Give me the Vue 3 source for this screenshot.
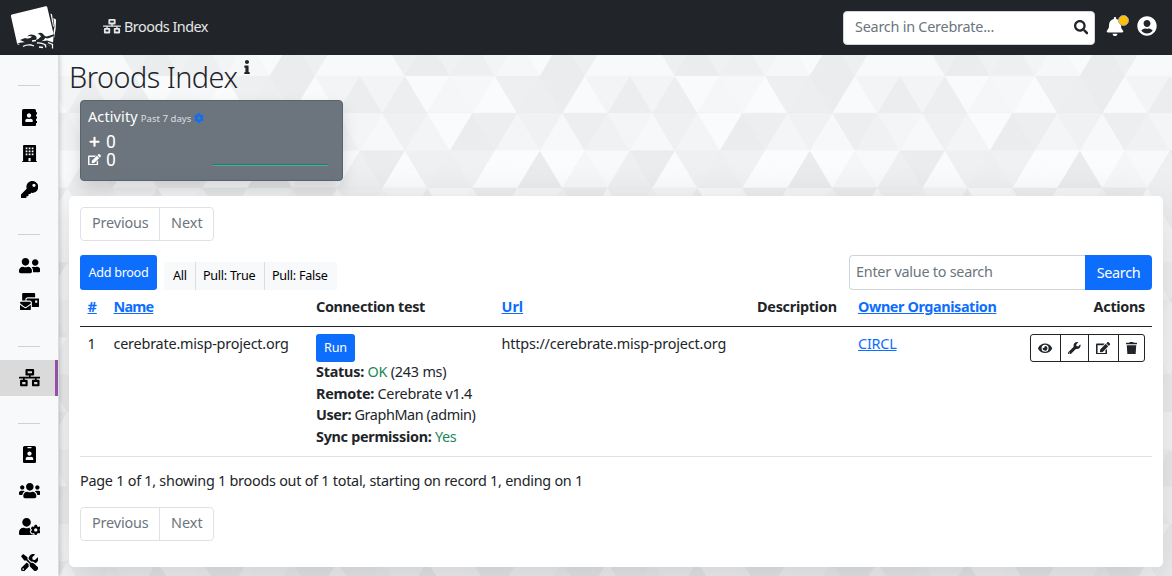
<script setup>
const icons = {
  network: [640, 'M640 264v-16c0-8.84-7.16-16-16-16H344v-40h72c17.67 0 32-14.33 32-32V32c0-17.67-14.33-32-32-32H224c-17.67 0-32 14.33-32 32v128c0 17.67 14.33 32 32 32h72v40H16c-8.84 0-16 7.16-16 16v16c0 8.84 7.16 16 16 16h104v40H64c-17.67 0-32 14.33-32 32v128c0 17.67 14.33 32 32 32h160c17.67 0 32-14.33 32-32V352c0-17.67-14.33-32-32-32h-56v-40h304v40h-56c-17.67 0-32 14.33-32 32v128c0 17.67 14.33 32 32 32h160c17.67 0 32-14.33 32-32V352c0-17.67-14.33-32-32-32h-56v-40h104c8.84 0 16-7.16 16-16zM256 128V64h128v64H256zm-64 320H96v-64h96v64zm352 0h-96v-64h96v64z'],
  book: [448, 'M436 160c6.6 0 12-5.4 12-12v-40c0-6.6-5.4-12-12-12h-20V48c0-26.5-21.5-48-48-48H48C21.5 0 0 21.5 0 48v416c0 26.5 21.5 48 48 48h320c26.5 0 48-21.5 48-48v-48h20c6.6 0 12-5.4 12-12v-40c0-6.6-5.4-12-12-12h-20v-64h20c6.6 0 12-5.4 12-12v-40c0-6.6-5.4-12-12-12h-20v-64h20zm-228-32c35.3 0 64 28.7 64 64s-28.7 64-64 64-64-28.7-64-64 28.7-64 64-64zm112 236.8c0 10.6-10 19.2-22.4 19.2H118.4C106 384 96 375.4 96 364.8v-19.2c0-31.8 30.1-57.6 67.2-57.6h5c12.3 5.1 25.7 8 39.8 8s27.6-2.9 39.8-8h5c37.1 0 67.2 25.8 67.2 57.6v19.2z'],
  building: [448, 'M436 480h-20V24c0-13.255-10.745-24-24-24H56C42.745 0 32 10.745 32 24v456H12c-6.627 0-12 5.373-12 12v20h448v-20c0-6.627-5.373-12-12-12zM108 72h52v52h-52zM198 72h52v52h-52zM288 72h52v52h-52zM108 162h52v52h-52zM198 162h52v52h-52zM288 162h52v52h-52zM108 252h52v52h-52zM198 252h52v52h-52zM288 252h52v52h-52zM192 384h64v96h-64z'],
  key: [512, 'M512 176.001C512 273.203 433.202 352 336 352c-11.22 0-22.19-1.062-32.827-3.069l-24.012 27.014A23.999 23.999 0 0 1 261.223 384H224v40c0 13.255-10.745 24-24 24h-40v40c0 13.255-10.745 24-24 24H24c-13.255 0-24-10.745-24-24v-78.059c0-6.365 2.529-12.47 7.029-16.971l161.802-161.802C163.108 213.814 160 195.271 160 176 160 78.798 238.797.001 335.999 0 433.488-.001 512 78.511 512 176.001zM336 128c0 26.51 21.49 48 48 48s48-21.49 48-48-21.49-48-48-48-48 21.49-48 48z'],
  friends: [640, 'M192 256c61.9 0 112-50.1 112-112S253.9 32 192 32 80 82.1 80 144s50.1 112 112 112zm76.8 32h-8.3c-20.8 10-43.9 16-68.5 16s-47.6-6-68.5-16h-8.3C51.6 288 0 339.6 0 403.2V432c0 26.5 21.5 48 48 48h288c26.5 0 48-21.5 48-48v-28.8c0-63.6-51.6-115.2-115.2-115.2zM480 256c53 0 96-43 96-96s-43-96-96-96-96 43-96 96 43 96 96 96zm48 32h-3.8c-13.9 4.8-28.6 8-44.2 8s-30.3-3.2-44.2-8H432c-20.4 0-39.2 5.9-55.7 15.4 24.4 26.3 39.7 61.2 39.7 99.8v38.4c0 2.2-.5 4.3-.6 6.4H592c26.5 0 48-21.5 48-48 0-61.9-50.1-112-112-112z'],
  mail: [576, 'M160 448c-25.6 0-51.2-22.4-64-32-64-44.8-83.2-60.8-96-70.4V480c0 17.67 14.33 32 32 32h256c17.67 0 32-14.33 32-32V345.6c-12.8 9.6-32 25.6-96 70.4-12.8 9.6-38.4 32-64 32zm128-192H32c-17.67 0-32 14.33-32 32v16c25.6 19.2 22.4 19.2 115.2 86.4 9.6 6.4 28.8 25.6 44.8 25.6s35.2-19.2 44.8-22.4c92.8-67.2 89.6-67.2 115.2-86.4V288c0-17.67-14.33-32-32-32zm256-96H224c-17.67 0-32 14.33-32 32v32h96c33.21 0 60.59 25.42 63.71 57.82l.29-.22V416h192c17.67 0 32-14.33 32-32V192c0-17.67-14.33-32-32-32zm-32 128h-64v-64h64v64zm-352-96c0-35.29 28.71-64 64-64h224V32c0-17.67-14.33-32-32-32H96C78.33 0 64 14.33 64 32v192h96v-32z'],
  badge: [384, 'M336 0H48C21.5 0 0 21.5 0 48v416c0 26.5 21.5 48 48 48h288c26.5 0 48-21.5 48-48V48c0-26.5-21.5-48-48-48zM144 32h96c8.8 0 16 7.2 16 16s-7.2 16-16 16h-96c-8.8 0-16-7.2-16-16s7.2-16 16-16zm48 128c35.3 0 64 28.7 64 64s-28.7 64-64 64-64-28.7-64-64 28.7-64 64-64zm112 236.8c0 10.6-10 19.2-22.4 19.2H102.4C90 416 80 407.4 80 396.8v-19.2c0-31.8 30.1-57.6 67.2-57.6h5c12.3 5.1 25.7 8 39.8 8s27.6-2.9 39.8-8h5c37.1 0 67.2 25.8 67.2 57.6v19.2z'],
  users: [640, 'M96 224c35.3 0 64-28.7 64-64s-28.7-64-64-64-64 28.7-64 64 28.7 64 64 64zm448 0c35.3 0 64-28.7 64-64s-28.7-64-64-64-64 28.7-64 64 28.7 64 64 64zm32 32h-64c-17.6 0-33.5 7.1-45.1 18.6 40.3 22.1 68.9 62 75.1 109.4h66c17.7 0 32-14.3 32-32v-32c0-35.3-28.7-64-64-64zm-256 0c61.9 0 112-50.1 112-112S381.9 32 320 32 208 82.1 208 144s50.1 112 112 112zm76.8 32h-8.3c-20.8 10-43.9 16-68.5 16s-47.6-6-68.5-16h-8.3C179.6 288 128 339.6 128 403.2V432c0 26.5 21.5 48 48 48h288c26.5 0 48-21.5 48-48v-28.8c0-63.6-51.6-115.2-115.2-115.2zm-223.7-13.4C161.5 263.1 145.6 256 128 256H64c-35.3 0-64 28.7-64 64v32c0 17.7 14.3 32 32 32h65.9c6.3-47.4 34.9-87.3 75.2-109.4z'],
  usercog: [640, 'M610.5 373.3c2.6-14.1 2.6-28.5 0-42.6l25.8-14.9c3-1.7 4.3-5.2 3.3-8.5-6.7-21.6-18.2-41.2-33.2-57.4-2.3-2.5-6-3.1-9-1.4l-25.8 14.9c-10.9-9.3-23.4-16.5-36.9-21.3v-29.8c0-3.4-2.4-6.4-5.7-7.1-22.3-5-45-4.8-66.2 0-3.3.7-5.7 3.7-5.7 7.1v29.8c-13.5 4.8-26 12-36.9 21.3l-25.8-14.9c-2.9-1.7-6.7-1.1-9 1.4-15 16.2-26.5 35.8-33.2 57.4-1 3.3.4 6.8 3.3 8.5l25.8 14.9c-2.6 14.1-2.6 28.5 0 42.6l-25.8 14.9c-3 1.7-4.3 5.2-3.3 8.5 6.7 21.6 18.2 41.1 33.2 57.4 2.3 2.5 6 3.1 9 1.4l25.8-14.9c10.9 9.3 23.4 16.5 36.9 21.3v29.8c0 3.4 2.4 6.4 5.7 7.1 22.3 5 45 4.8 66.2 0 3.3-.7 5.7-3.7 5.7-7.1v-29.8c13.5-4.8 26-12 36.9-21.3l25.8 14.9c2.9 1.7 6.7 1.1 9-1.4 15-16.2 26.5-35.8 33.2-57.4 1-3.3-.4-6.8-3.3-8.5l-25.8-14.9zM496 400.5c-26.8 0-48.5-21.8-48.5-48.5s21.8-48.5 48.5-48.5 48.5 21.8 48.5 48.5-21.7 48.5-48.5 48.5zM224 256c70.7 0 128-57.3 128-128S294.7 0 224 0 96 57.3 96 128s57.3 128 128 128zm201.2 226.5c-2.3-1.2-4.6-2.6-6.8-3.9l-7.9 4.6c-6 3.4-12.8 5.3-19.6 5.3-10.9 0-21.4-4.6-28.9-12.6-18.3-19.8-32.3-43.9-40.2-69.6-5.5-17.7 1.9-36.4 17.9-45.7l7.9-4.6c-.1-2.6-.1-5.2 0-7.8l-7.9-4.6c-16-9.2-23.4-28-17.9-45.7.9-2.9 2.2-5.8 3.2-8.7-3.8-.3-7.5-1.2-11.4-1.2h-16.7c-22.2 10.2-46.9 16-72.9 16s-50.6-5.8-72.9-16h-16.7C60.2 288 0 348.2 0 422.4V464c0 26.5 21.5 48 48 48h352c10.1 0 19.5-3.2 27.2-8.5-1.2-3.8-2-7.7-2-11.8v-9.2z'],
  tools: [512, 'M501.1 395.7L384 278.6c-23.1-23.1-57.6-27.6-85.4-13.9L192 158.1V96L64 0 0 64l96 128h62.1l106.6 106.6c-13.6 27.8-9.2 62.3 13.9 85.4l117.1 117.1c14.6 14.6 38.2 14.6 52.7 0l52.7-52.7c14.5-14.6 14.5-38.2 0-52.7zM331.7 225c28.3 0 54.9 11 74.9 31l19.4 19.4c15.8-6.9 30.8-16.5 43.8-29.5 37.1-37.1 49.7-89.3 37.9-136.7-2.2-9-13.5-12.1-20.1-5.5l-74.4 74.4-67.9-11.3L334 98.9l74.4-74.4c6.6-6.6 3.4-17.9-5.7-20.2-47.4-11.7-99.6.9-136.6 37.9-28.5 28.5-41.9 66.1-41.2 103.6l82.1 82.1c8.1-1.9 16.5-2.9 24.7-2.9zm-103.9 82l-56.7-56.7L18.7 402.8c-25 25-25 65.5 0 90.5s65.5 25 90.5 0l123.6-123.6c-7.6-19.9-9.9-41.6-5-62.7zM64 472c-13.2 0-24-10.8-24-24 0-13.3 10.7-24 24-24s24 10.7 24 24c0 13.2-10.7 24-24 24z'],
  search: [512, 'M505 442.7L405.3 343c-4.5-4.5-10.6-7-17-7H372c27.6-35.3 44-79.7 44-128C416 93.1 322.9 0 208 0S0 93.1 0 208s93.1 208 208 208c48.3 0 92.7-16.4 128-44v16.3c0 6.4 2.5 12.5 7 17l99.7 99.7c9.4 9.4 24.6 9.4 33.9 0l28.3-28.3c9.4-9.4 9.4-24.6.1-34zM208 336c-70.7 0-128-57.2-128-128 0-70.7 57.2-128 128-128 70.7 0 128 57.2 128 128 0 70.7-57.2 128-128 128z'],
  bell: [448, 'M224 512c35.32 0 63.97-28.65 63.97-64H160.03c0 35.35 28.65 64 63.97 64zm215.39-149.71c-19.32-20.76-55.47-51.99-55.47-154.29 0-77.7-54.48-139.9-127.94-155.16V32c0-17.67-14.32-32-31.98-32s-31.98 14.33-31.98 32v20.84C118.56 68.1 64.08 130.3 64.08 208c0 102.3-36.15 133.53-55.47 154.29-6 6.45-8.66 14.16-8.61 21.71.11 16.4 12.98 32 32.1 32h383.8c19.12 0 32-15.6 32.1-32 .05-7.55-2.61-15.27-8.61-21.71z'],
  user: [496, 'M248 8C111 8 0 119 0 256s111 248 248 248 248-111 248-248S385 8 248 8zm0 96c48.6 0 88 39.4 88 88s-39.4 88-88 88-88-39.4-88-88 39.4-88 88-88zm0 344c-58.7 0-111.3-26.6-146.5-68.2 18.8-35.4 55.6-59.8 98.5-59.8 2.4 0 4.8.4 7.1 1.1 13 4.2 26.6 6.9 40.9 6.9 14.3 0 28-2.7 40.9-6.9 2.3-.7 4.7-1.1 7.1-1.1 42.9 0 79.7 24.4 98.5 59.8C359.3 421.4 306.7 448 248 448z'],
  info: [192, 'M20 424.229h20V279.771H20c-11.046 0-20-8.954-20-20V212c0-11.046 8.954-20 20-20h112c11.046 0 20 8.954 20 20v212.229h20c11.046 0 20 8.954 20 20V492c0 11.046-8.954 20-20 20H20c-11.046 0-20-8.954-20-20v-47.771c0-11.046 8.954-20 20-20zM96 0C56.235 0 24 32.235 24 72s32.235 72 72 72 72-32.235 72-72S135.764 0 96 0z'],
  plus: [448, 'M416 208H272V64c0-17.67-14.33-32-32-32h-32c-17.67 0-32 14.33-32 32v144H32c-17.67 0-32 14.33-32 32v32c0 17.67 14.33 32 32 32h144v144c0 17.67 14.33 32 32 32h32c17.67 0 32-14.33 32-32V304h144c17.67 0 32-14.33 32-32v-32c0-17.67-14.33-32-32-32z'],
  edit: [576, 'M402.6 83.2l90.2 90.2c3.8 3.8 3.8 10 0 13.8L274.4 405.6l-92.8 10.3c-12.4 1.4-22.9-9.1-21.5-21.5l10.3-92.8L388.8 83.2c3.8-3.8 10-3.8 13.8 0zm162-22.9l-48.8-48.8c-15.2-15.2-39.9-15.2-55.2 0l-35.4 35.4c-3.8 3.8-3.8 10 0 13.8l90.2 90.2c3.8 3.8 10 3.8 13.8 0l35.4-35.4c15.2-15.3 15.2-40 0-55.2zM384 346.2V448H64V128h229.8c3.2 0 6.2-1.3 8.5-3.5l40-40c7.6-7.6 2.2-20.5-8.5-20.5H48C21.5 64 0 85.5 0 112v352c0 26.5 21.5 48 48 48h352c26.5 0 48-21.5 48-48V306.2c0-10.7-12.9-16-20.5-8.5l-40 40c-2.2 2.3-3.5 5.3-3.5 8.5z'],
  cog: [512, 'M487.4 315.7l-42.6-24.6c4.3-23.2 4.3-47 0-70.2l42.6-24.6c4.9-2.8 7.1-8.6 5.5-14-11.1-35.6-30-67.8-54.7-94.6-3.8-4.1-10-5.1-14.8-2.3L380.8 110c-17.9-15.4-38.5-27.3-60.8-35.1V25.8c0-5.6-3.9-10.5-9.4-11.7-36.7-8.2-74.3-7.8-109.2 0-5.5 1.2-9.4 6.1-9.4 11.7V75c-22.2 7.9-42.8 19.8-60.8 35.1L88.7 85.5c-4.9-2.8-11-1.9-14.8 2.3-24.7 26.7-43.6 58.9-54.7 94.6-1.7 5.4.6 11.2 5.5 14L67.3 221c-4.3 23.2-4.3 47 0 70.2l-42.6 24.6c-4.9 2.8-7.1 8.6-5.5 14 11.1 35.6 30 67.8 54.7 94.6 3.8 4.1 10 5.1 14.8 2.3l42.6-24.6c17.9 15.4 38.5 27.3 60.8 35.1v49.2c0 5.6 3.9 10.5 9.4 11.7 36.7 8.2 74.3 7.8 109.2 0 5.5-1.2 9.4-6.1 9.4-11.7v-49.2c22.2-7.9 42.8-19.8 60.8-35.1l42.6 24.6c4.9 2.8 11 1.9 14.8-2.3 24.7-26.7 43.6-58.9 54.7-94.6 1.5-5.5-.7-11.3-5.6-14.1zM256 336c-44.1 0-80-35.9-80-80s35.9-80 80-80 80 35.9 80 80-35.9 80-80 80z'],
  eye: [576, 'M572.52 241.4C518.29 135.59 410.93 64 288 64S57.68 135.64 3.48 241.41a32.35 32.35 0 0 0 0 29.19C57.71 376.41 165.07 448 288 448s230.32-71.64 284.52-177.41a32.35 32.35 0 0 0 0-29.19zM288 400a144 144 0 1 1 144-144 143.93 143.93 0 0 1-144 144zm0-240a95.31 95.31 0 0 0-25.31 3.79 47.85 47.85 0 0 1-66.9 66.9A95.78 95.78 0 1 0 288 160z'],
  wrench: [512, 'M507.73 109.1c-2.24-9.03-13.54-12.09-20.12-5.51l-74.36 74.36-67.88-11.31-11.31-67.88 74.36-74.36c6.62-6.62 3.43-17.9-5.66-20.16-47.38-11.74-99.55.91-136.58 37.93-39.64 39.64-50.55 97.1-34.05 147.2L18.74 402.76c-24.99 24.99-24.99 65.51 0 90.5 24.99 24.99 65.51 24.99 90.5 0l213.21-213.21c50.12 16.71 107.47 5.68 147.37-34.22 37.07-37.07 49.7-89.32 37.91-136.73zM64 472c-13.25 0-24-10.75-24-24 0-13.26 10.75-24 24-24s24 10.74 24 24c0 13.25-10.75 24-24 24z'],
  trash: [448, 'M432 32H312l-9.4-18.7A24 24 0 0 0 281.1 0H166.8a23.72 23.72 0 0 0-21.4 13.3L136 32H16A16 16 0 0 0 0 48v32a16 16 0 0 0 16 16h416a16 16 0 0 0 16-16V48a16 16 0 0 0-16-16zM53.2 467a48 48 0 0 0 47.9 45h245.8a48 48 0 0 0 47.9-45L416 128H32z'],
}
const vb = (n) => `0 0 ${icons[n][0]} 512`
const path = (n) => icons[n][1]

const groups = [
  ['book', 'building', 'key'],
  ['friends', 'mail'],
  ['network'],
  ['badge', 'users', 'usercog', 'tools'],
]

// Triangle mosaic: each row lists the fills of the alternating up / down cells of one 270px tile.
const H = 37.35
const rows = [
  ['f8f9fb', 'eeeff1', 'ebecee', 'f0f1f3', 'eeeff1', 'f3f4f6', 'f6f7f9', 'f9fafc', 'ebecee', 'eeeff1', 'f8f9fb', 'f8f9fb'],
  ['ecedef', 'f3f4f6', 'edeef0', 'f9fafc', 'f5f6f8', 'f6f7f9', 'fafbfd', 'eeeff1', 'edeef0', 'ebecee', 'f9fafc', 'f3f4f6'],
  ['f7f8fa', 'eff0f2', 'f3f4f6', 'fafbfc', 'ebecee', 'edeef0', 'f4f5f7', 'f0f1f3', 'f7f8fa', 'edeef0', 'f0f1f3', 'f4f5f7'],
  ['eeeff1', 'ebecee', 'fafbfd', 'eff0f2', 'eeeff1', 'f0f1f3', 'fbfcfe', 'fbfcfe', 'eaebed', 'fbfcfe', 'f5f6f8', 'f8f9fb'],
  ['f0f1f3', 'f3f4f6', 'ebecee', 'f7f8fa', 'f5f6f8', 'ecedef', 'f5f6f8', 'f4f5f7', 'f0f1f3', 'ebecee', 'f6f7f9', 'eeeff1'],
]
const tiles = []
for (let r = 0; r < 15; r++) {
  const top = 38.67 + r * H - 55
  const apex = r % 2 ? 360 : 382.5
  const fills = rows[r % 5]
  for (let c = -18; c < 40; c++) {
    const x = apex + (c * 45) / 2
    const up = (c & 1) === 0
    const y1 = up ? top : top + H
    const y2 = up ? top + H : top
    tiles.push({ p: `${x},${y1} ${x - 22.5},${y2} ${x + 22.5},${y2}`, f: '#' + fills[((c % 12) + 12) % 12] })
  }
}
</script>

<template>
  <div class="page">
    <header class="top">
      <svg class="logo" viewBox="0 0 50 46">
        <path fill="#fff" d="M2 9.500L35.700 1.200Q36.900 1 37.200 2L43.700 29.500L43 38L40 40.500L29 38L19 36L9 40Q7.600 40.300 7.200 39L.9 11Q.8 9.800 2 9.500Z" />
        <path fill="#fff" d="M40.500 8.500l1.500.8 2 13-1-1zM43.300 13l2.700 1.500-.3 9-1.700 10-.5-6 1-6z" />
        <path fill="#212529" d="M15 33q5 1.500 7-1.500q-3-1-5 .2q2.500-3.400 7-1.700q4 1.700 2 5q3-1 5-3.500q-1-3-3.500-2.500q4-2.500 6 .5q1.500 2.500 4 1.800l6.500-2 .3 1.500-5 2.200q-3 1-4-.3q-1 2.500-4 3.500l6-.7 6 2v5q-6-4-12-3l-5-.5-8 1-8 2.600q-3 .8-4.500-1q3-.3 4-2.300l-4 .3q5-2.800 9.200-2.300q-3-1.200-5-2.300z" />
        <path fill="none" stroke="#fff" stroke-width="1.300" d="M13 41.500q3-2 8-1.500l3 1M27 38q4-.5 8 1.500l1 3M38 37.500l4.500 2v4M29 42l4 .5M22 36l4-.5" />
      </svg>
      <div class="crumb"><svg class="i" :viewBox="vb('network')"><path :d="path('network')" /></svg><span>Broods Index</span></div>
      <div class="gsearch"><span>Search in Cerebrate...</span><svg :viewBox="vb('search')"><path :d="path('search')" /></svg></div>
      <div class="bell"><svg :viewBox="vb('bell')"><path :d="path('bell')" /></svg><i></i></div>
      <svg class="me" :viewBox="vb('user')"><path :d="path('user')" /></svg>
    </header>
    <div class="body">
      <aside>
        <template v-for="(g, k) in groups" :key="k">
          <hr />
          <div v-for="n in g" :key="n" class="nav" :class="{ on: n === 'network' }">
            <svg :viewBox="vb(n)"><path fill-rule="evenodd" :d="path(n)" /></svg>
          </div>
        </template>
      </aside>
      <main>
        <svg class="mosaic" width="1172" height="521">
          <polygon v-for="(t, k) in tiles" :key="k" :points="t.p" :fill="t.f" :stroke="t.f" stroke-width=".4" />
        </svg>
        <h1><span>Broods Index</span><svg :viewBox="vb('info')"><path :d="path('info')" /></svg></h1>
        <section class="activity">
          <div class="ttl"><span class="a">Activity</span><span class="b">Past 7 days</span><svg :viewBox="vb('cog')"><path :d="path('cog')" /></svg></div>
          <div class="stats">
            <div>
              <p><svg class="pl" :viewBox="vb('plus')"><path :d="path('plus')" /></svg><span>0</span></p>
              <p><svg :viewBox="vb('edit')"><path :d="path('edit')" /></svg><span>0</span></p>
            </div>
            <div class="spark"></div>
          </div>
        </section>
        <section class="card">
          <div class="pager"><span class="pv">Previous</span><span class="nx">Next</span></div>
          <div class="tools">
            <button class="add"><span>Add brood</span></button>
            <div class="filters"><span class="f1">All</span><span class="f2">Pull: True</span><span class="f3">Pull: False</span></div>
            <div class="find"><span class="ph">Enter value to search</span><button><span>Search</span></button></div>
          </div>
          <div class="row head">
            <a class="c1">#</a><a class="h2">Name</a><b class="h3">Connection test</b><a>Url</a>
            <b class="h5">Description</b><a class="h6">Owner Organisation</a><b class="r">Actions</b>
          </div>
          <div class="row data">
            <span class="c1">1</span>
            <span class="d2">cerebrate.misp-project.org</span>
            <div class="test">
              <button><span>Run</span></button>
              <p class="t1"><b>Status:</b> <em>OK</em> (243 ms)</p>
              <p class="t2"><b>Remote:</b> Cerebrate v1.4</p>
              <p class="t3"><b>User:</b> GraphMan (admin)</p>
              <p class="t4"><b>Sync permission:</b> <em>Yes</em></p>
            </div>
            <span class="d4">https://cerebrate.misp-project.org</span>
            <span></span>
            <a class="d6">CIRCL</a>
            <div class="acts">
              <i v-for="n in ['eye', 'wrench', 'edit', 'trash']" :key="n" :class="n"><svg :viewBox="vb(n)"><path :d="path(n)" /></svg></i>
            </div>
          </div>
          <p class="sum"><span>Page 1 of 1, showing 1 broods out of 1 total, starting on record 1, ending on 1</span></p>
          <div class="pager"><span class="pv">Previous</span><span class="nx">Next</span></div>
        </section>
      </main>
    </div>
  </div>
</template>

<style>
body { margin: 0; overflow: hidden; }
</style>

<style scoped>
* { box-sizing: border-box; }
.page { width: 1172px; height: 576px; overflow: hidden; font: 14.4px/21.6px "Noto Sans", "Open Sans", sans-serif; color: #212529; background: #f3f4f6; }
p, h1 { margin: 0; }
svg { display: block; fill: currentColor; flex: none; }
span { white-space: nowrap; }
button { border: 0; padding: 0; background: #0d6efd; color: #fff; font-family: inherit; display: flex; align-items: center; justify-content: center; }
.top { height: 55px; background: #212529; display: flex; align-items: center; color: #fff; }
.logo { width: 50px; height: 46px; margin-left: 10px; }
.crumb { display: flex; align-items: center; margin-left: 43px; gap: 3px; color: #e6e7e8; flex: 1; letter-spacing: -.5px; padding-bottom: 2px; }
.crumb .i { width: 18px; height: 14.4px; }
.gsearch { width: 252px; height: 34px; background: #fff; border: 1px solid #ced4da; border-radius: 4px; display: flex; align-items: center; justify-content: space-between; padding: 0 6px 0 11px; color: #6c757d; letter-spacing: -.23px; }
.gsearch span { padding-bottom: 2px; }
.gsearch svg { width: 14.4px; height: 14.4px; color: #212529; }
.bell { position: relative; margin: 0 0 3px 11px; width: 18px; }
.bell svg { width: 18px; height: 19px; }
.bell i { position: absolute; width: 11px; height: 11px; border-radius: 50%; background: #ffc107; border: 1px solid #aaa; left: 12px; top: -2px; }
.me { width: 20px; height: 20px; margin: 0 15px 3px 13px; }
.body { display: flex; height: 521px; }
aside { width: 59px; flex: none; background: #f8f9fa; color: #000; border-right: 1px solid #dcdde0; box-shadow: 1px 0 4px rgba(0,0,0,.18); position: relative; z-index: 2; display: flex; flex-direction: column; }
aside hr { width: 22px; height: 1px; border: 0; background: #cfd1d3; margin: 30px auto 13.2px 18px; flex: none; }
.nav { height: 36.1px; flex: none; display: flex; justify-content: center; align-items: center; padding-left: 1px; }
.nav + hr { margin-top: 26.5px; margin-bottom: 12.7px; }
.nav svg { height: 17.3px; }
.nav.on { background: #dadada; border-right: 3px solid #9250a6; padding-left: 4px; }
main { flex: 1; position: relative; padding: 0 9px 0 10px; }
.mosaic { position: absolute; left: -59px; top: 0; }
main > *:not(.mosaic) { position: relative; }
h1 { font-size: 28.8px; font-weight: 300; line-height: 34px; height: 45px; padding-top: 5px; display: flex; gap: 7px; letter-spacing: -.5px; }
h1 svg { width: 6px; height: 14.4px; }
.activity { margin-left: 11px; width: 263px; height: 81px; background: #6c757d; border: 1px solid #5c646b; border-radius: 4px; color: #fff; padding: 5px 7px; box-shadow: 0 8px 16px rgba(0,0,0,.13); }
.ttl { display: flex; align-items: baseline; gap: 3px; }
.ttl .a { letter-spacing: .15px; }
.ttl .b { font-size: 9.6px; color: #dcdfe1; }
.ttl svg { width: 10px; height: 10px; color: #0d6efd; align-self: center; }
.stats { display: flex; justify-content: space-between; padding: 3px 7px 0 0; }
.stats p { height: 18px; line-height: 18px; font-size: 17px; display: flex; align-items: center; gap: 5px; }
.stats span { font-family: Roboto, "Noto Sans", sans-serif; font-size: 17.5px; padding-top: 1px; }
.stats svg { width: 13px; height: 11.5px; }
.stats .pl { padding: 0 1px; }
.spark { width: 115px; height: 1px; background: #1cc29a; margin-top: 32px; box-shadow: 0 -1px 1px rgba(0,0,0,.2); }
.card { margin-top: 15px; width: 1094px; height: 371px; background: #fff; border-radius: 5px; padding: 11px 11px; box-shadow: 0 16px 48px rgba(0,0,0,.16); }
.pager { display: flex; width: 134px; height: 34px; border: 1px solid #dee2e6; border-radius: 4px; color: #6c757d; line-height: 30px; }
.pager span { padding-left: 11px; }
.pager .pv { width: 79px; border-right: 1px solid #dee2e6; letter-spacing: -.15px; }
.tools { display: flex; margin-top: 14px; height: 35px; }
.add { width: 77px; height: 35px; border-radius: 3px; font-size: 12.6px; letter-spacing: -.3px; }
.filters { display: flex; margin: 7px 0 0 7px; height: 28px; background: #f8f9fa; border-radius: 3px 3px 0 0; font-size: 12.6px; line-height: 27px; color: #000; flex: none; letter-spacing: -.27px; }
.filters span { padding-left: 7px; border-left: 1px solid #dcdfe2; }
.filters .f1 { width: 31px; border: 0; padding-left: 9px; }
.f2 { width: 69px; }
.f3 { width: 73px; }
.find { display: flex; margin-left: auto; width: 303px; height: 35px; }
.ph { flex: 1; border: 1px solid #ced4da; border-right: 0; border-radius: 4px 0 0 4px; padding-left: 6px; line-height: 31px; color: #6c757d; letter-spacing: -.25px; }
.find button { width: 67px; font-size: 14.4px; border-radius: 0 4px 4px 0; letter-spacing: -.3px; }
.find button span { padding-bottom: 1px; }
.row { display: grid; grid-template-columns: 26px 202.5px 185.5px 255.5px 101px 170px 124px; padding-left: 7.5px; }
.head { height: 37px; padding-top: 6px; border-bottom: 1px solid #212529; }
.head a, .head b { font-weight: 700; justify-self: start; }
.row a { color: #0d6efd; text-decoration: underline; }
.h2 { letter-spacing: -.8px; }
.h3 { letter-spacing: -.33px; }
.h5 { letter-spacing: -.25px; }
.h6 { letter-spacing: -.4px; }
.head .r { justify-self: end; padding-right: 7px; letter-spacing: -.3px; }
.data { height: 130px; padding-top: 6px; border-bottom: 1px solid #dee2e6; }
.d2 { letter-spacing: -.2px; }
.d4 { letter-spacing: -.16px; }
.d6 { justify-self: start; letter-spacing: -.2px; }
.test button { width: 39px; height: 28px; border-radius: 3px; font-size: 12.6px; margin-top: 1px; padding-bottom: 1px; letter-spacing: -.2px; }
.test p { white-space: nowrap; position: relative; top: -1px; }
.test em { color: #198754; font-style: normal; }
.t1 { letter-spacing: -.23px; }
.t2 { letter-spacing: -.27px; }
.t3 { letter-spacing: -.4px; }
.t4 { letter-spacing: -.3px; }
.acts { justify-self: end; margin: 1px 7px 0 0; display: flex; width: 115px; height: 28px; border: 1px solid #212529; border-radius: 3px; }
.acts i { display: flex; align-items: center; justify-content: center; width: 30px; border-left: 1px solid #212529; }
.acts .eye { border: 0; width: 29px; }
.acts .wrench { width: 28px; }
.acts .trash { width: 26px; }
.acts svg { height: 12.6px; }
.sum { margin: 13px 0 15px; letter-spacing: -.255px; }
</style>
